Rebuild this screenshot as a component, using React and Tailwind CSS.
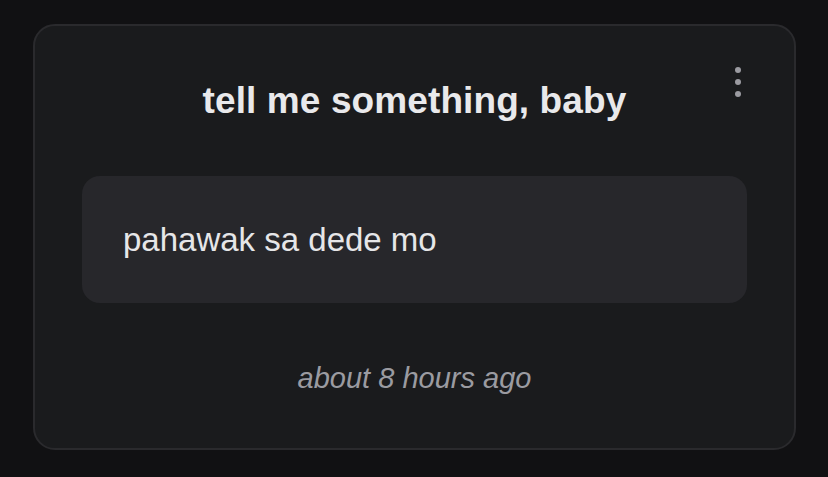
import React from 'react';

const MenuDots = () => (
  <button className="absolute top-[37px] right-[49px] flex flex-col items-center gap-[6px] p-1">
    <span className="block w-[6px] h-[6px] rounded-full bg-[#9b9ba1]" />
    <span className="block w-[6px] h-[6px] rounded-full bg-[#9b9ba1]" />
    <span className="block w-[6px] h-[6px] rounded-full bg-[#9b9ba1]" />
  </button>
);

const App = () => {
  return (
    <div
      className="w-full min-h-screen h-[477px] bg-[#111113] pt-[24px] pl-[33px]"
      style={{ fontFamily: '"Liberation Sans", Arial, sans-serif' }}
    >
      <div className="relative w-[763px] h-[426px] rounded-[22px] border-2 border-[#2a2a2d] bg-[#1a1b1d] flex flex-col">
        <MenuDots />

        {/* Question */}
        <h2 className="mt-[53px] text-center text-[37px] leading-[44px] font-bold text-[#e9e9eb] tracking-[0.1px]">
          tell me something, baby
        </h2>

        {/* Answer */}
        <div className="mt-[53px] mx-[47px] h-[127px] rounded-[18px] bg-[#27272b] flex items-center pl-[41px]">
          <p className="text-[33px] leading-[40px] text-[#e6e6e8]">pahawak sa dede mo</p>
        </div>

        {/* Timestamp */}
        <p className="mt-[57px] text-center text-[29px] leading-[36px] italic text-[#9b9ba1]">
          about 8 hours ago
        </p>
      </div>
    </div>
  );
};

export default App;
